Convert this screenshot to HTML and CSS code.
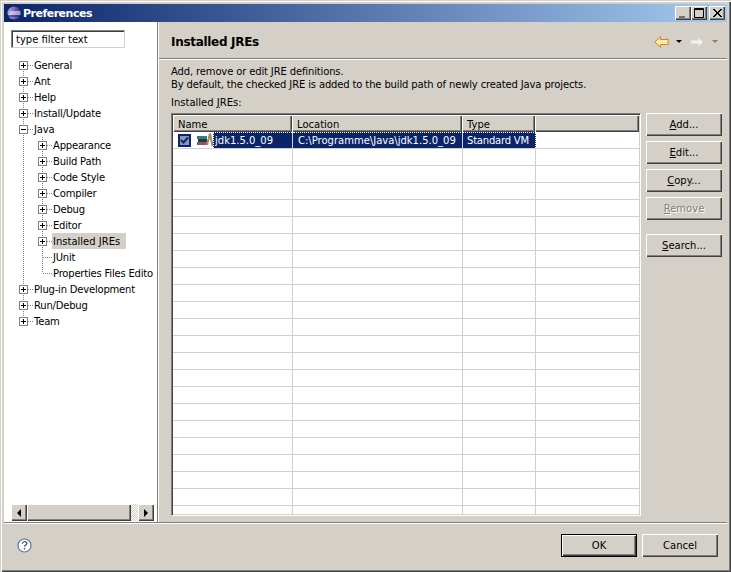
FILE: index.html
```html
<!DOCTYPE html>
<html lang="en">
<head>
<meta charset="utf-8">
<title>Preferences</title>
<link rel="stylesheet" href="styles.css">
</head>
<body>
<div class="window">
  <header class="titlebar">
    <svg class="app-icon" width="14" height="14" viewBox="0 0 14 14"><defs><linearGradient id="sph" x1="0" y1="0" x2="1" y2="0"><stop offset="0" stop-color="#b7a8dc"/><stop offset="1" stop-color="#3c2f8c"/></linearGradient></defs><circle cx="7" cy="7" r="6.500" fill="url(#sph)"/><path d="M3 6h10.500M2 8h11.500" stroke="#fff" stroke-width="1.100"/><path d="M1 10h11" stroke="#2a2270"/></svg>
    <span class="title-text">Preferences</span>
    <div class="win-buttons">
      <button class="win-btn"><svg width="16" height="14" viewBox="0 0 16 14"><path d="M4 10h6v2H4z" fill="#000" opacity=".45"/></svg></button>
      <button class="win-btn"><svg width="16" height="14" viewBox="0 0 16 14"><path d="M3.500 2.500h9v9h-9zM3 3.500h10" fill="none" stroke="#000"/></svg></button>
      <button class="win-btn close"><svg width="16" height="14" viewBox="0 0 16 14"><path d="M4 3l8 8M5 3l8 8M12 3l-8 8M13 3l-8 8" stroke="#000"/></svg></button>
    </div>
  </header>
  <div class="main">
    <aside class="sidebar">
      <input class="filter" value="type filter text">
      <div class="tree">
        <div class="row first"><span class="twist"><i class="box plus"></i></span><span class="label">General</span></div>
        <div class="row lv1"><span class="twist"><i class="box plus"></i></span><span class="label">Ant</span></div>
        <div class="row lv1"><span class="twist"><i class="box plus"></i></span><span class="label">Help</span></div>
        <div class="row lv1"><span class="twist"><i class="box plus"></i></span><span class="label">Install/Update</span></div>
        <div class="row lv1"><span class="twist"><i class="box"></i></span><span class="label">Java</span></div>
        <div class="row"><span class="guide"></span><span class="twist"><i class="box plus"></i></span><span class="label">Appearance</span></div>
        <div class="row"><span class="guide"></span><span class="twist"><i class="box plus"></i></span><span class="label">Build Path</span></div>
        <div class="row"><span class="guide"></span><span class="twist"><i class="box plus"></i></span><span class="label">Code Style</span></div>
        <div class="row"><span class="guide"></span><span class="twist"><i class="box plus"></i></span><span class="label">Compiler</span></div>
        <div class="row"><span class="guide"></span><span class="twist"><i class="box plus"></i></span><span class="label">Debug</span></div>
        <div class="row"><span class="guide"></span><span class="twist"><i class="box plus"></i></span><span class="label">Editor</span></div>
        <div class="row"><span class="guide"></span><span class="twist"><i class="box plus"></i></span><span class="label selected">Installed JREs</span></div>
        <div class="row"><span class="guide"></span><span class="tee"></span><span class="label">JUnit</span></div>
        <div class="row"><span class="guide"></span><span class="elbow"></span><span class="label">Properties Files Edito</span></div>
        <div class="row lv1"><span class="twist"><i class="box plus"></i></span><span class="label">Plug-in Development</span></div>
        <div class="row lv1"><span class="twist"><i class="box plus"></i></span><span class="label">Run/Debug</span></div>
        <div class="row last"><span class="twist"><i class="box plus"></i></span><span class="label">Team</span></div>
      </div>
      <div class="hscroll">
        <span class="sb-btn"><i class="arrow-left"></i></span>
        <span class="sb-thumb"></span>
        <span class="sb-track"></span>
        <span class="sb-btn"><i class="arrow-right"></i></span>
      </div>
    </aside>
    <section class="content">
      <div class="page-head">
        <h1 class="page-title">Installed JREs</h1>
        <div class="nav">
          <svg width="15" height="12" viewBox="0 0 15 12"><path d="M.8 6L6.500.8v2.700h7.700v5H6.500v2.700z" fill="#ffe9a8" stroke="#c98a1a"/></svg>
          <i class="caret"></i>
          <svg class="fwd" width="14" height="10" viewBox="0 0 14 10"><path d="M13 5L8.500.8v2.400H1v3.600h7.500v2.400z" fill="#f4f3ef" stroke="#dededa"/></svg>
          <i class="caret dim"></i>
        </div>
      </div>
      <div class="page-body">
        <p class="intro">Add, remove or edit JRE definitions.<br>By default, the checked JRE is added to the build path of newly created Java projects.</p>
        <p class="table-label">Installed <u>J</u>REs:</p>
        <div class="split">
          <div class="table">
            <div class="thead">
              <span class="th c1">Name</span><span class="th c2">Location</span><span class="th c3">Type</span><span class="th c4"></span>
            </div>
            <div class="tr sel">
              <span class="td c1">
                <span class="check"><svg width="9" height="9" viewBox="0 0 9 9"><path d="M1 4l2.500 2.600L8 1.500" fill="none" stroke="#0a246a" stroke-width="2"/></svg></span>
                <svg class="jre" width="16" height="14" viewBox="0 0 16 14"><path d="M0 3h10v3H0z" fill="#2f7f88"/><path d="M1 6h9v3H1z" fill="#2c3a44"/><path d="M0 9h11v3H0z" fill="#8f5660"/><path d="M13 .5L10 12M13 .5L15.500 13" stroke="#a98a58" stroke-width="2"/></svg>
                <span class="name-sel">jdk1.5.0_09</span>
              </span>
              <span class="td c2 hi">C:\Programme\Java\jdk1.5.0_09</span>
              <span class="td c3 hi focus">Standard VM</span>
              <span class="td c4"></span>
            </div>
            <div class="tr"></div><div class="tr"></div><div class="tr"></div><div class="tr"></div><div class="tr"></div><div class="tr"></div><div class="tr"></div>
            <div class="tr"></div><div class="tr"></div><div class="tr"></div><div class="tr"></div><div class="tr"></div><div class="tr"></div><div class="tr"></div>
            <div class="tr"></div><div class="tr"></div><div class="tr"></div><div class="tr"></div><div class="tr"></div><div class="tr"></div><div class="tr"></div>
            <div class="tr"></div><div class="tr"></div>
          </div>
          <div class="side-buttons">
            <button class="btn"><u>A</u>dd...</button>
            <button class="btn"><u>E</u>dit...</button>
            <button class="btn"><u>C</u>opy...</button>
            <button class="btn disabled"><u>R</u>emove</button>
            <button class="btn gap"><u>S</u>earch...</button>
          </div>
        </div>
      </div>
    </section>
  </div>
  <footer class="footer">
    <svg class="help" width="15" height="15" viewBox="0 0 15 15"><circle cx="7.500" cy="7.500" r="6.500" fill="#fff" stroke="#5a74a8" stroke-width="1.200"/><path d="M5.300 5.600c.2-1.400 1.200-2 2.300-2 1.300 0 2.200.8 2.200 1.900 0 1.600-2.200 1.500-2.200 3.300" fill="none" stroke="#3c5a94" stroke-width="1.400"/><path d="M6.800 10h1.500v1.500H6.800z" fill="#3c5a94"/></svg>
    <div class="footer-buttons">
      <button class="btn default">OK</button>
      <button class="btn">Cancel</button>
    </div>
  </footer>
</div>
</body>
</html>
```

FILE: styles.css
```css
* { box-sizing: border-box; }
html, body { margin: 0; padding: 0; }
body {
  width: 731px;
  height: 572px;
  overflow: hidden;
  font-family: "DejaVu Sans", sans-serif;
  font-size: 10px;
  color: #000;
}
.window {
  width: 731px;
  height: 572px;
  padding: 4px 4px 4px 4px;
  background: #d4d0c8;
  display: flex;
  flex-direction: column;
  box-shadow: inset 1px 1px 0 #d4d0c8, inset 2px 2px 0 #fff, inset -1px -1px 0 #404040, inset -2px -2px 0 #808080;
}
.titlebar {
  height: 18px;
  flex: none;
  display: flex;
  align-items: center;
  padding: 0 2px 0 3px;
  background: linear-gradient(90deg, #0a246a, #a6caf0);
}
.app-icon { flex: none; margin-right: 2px; }
.title-text { color: #fff; font-weight: bold; font-size: 11px; letter-spacing: -0.5px; }
.win-buttons { margin-left: auto; display: flex; }
.win-btn {
  width: 16px;
  height: 14px;
  padding: 0;
  border: 0;
  display: block;
  background: #d4d0c8;
  box-shadow: inset 1px 1px 0 #fff, inset -1px -1px 0 #404040, inset -2px -2px 0 #808080;
}
.win-btn svg { display: block; }
.win-btn.close { margin-left: 2px; }
.main { flex: 1; display: flex; min-height: 0; }
.sidebar {
  width: 155px;
  flex: none;
  background: #fff;
  display: flex;
  flex-direction: column;
  padding: 8px 0 1px 7px;
  border-right: 1px solid #fff;
  box-shadow: inset -1px 0 0 #808080;
}
.filter {
  display: block;
  width: 114px;
  height: 18px;
  padding: 0 0 0 4px;
  margin: 0;
  border: 1px solid;
  border-color: #808080 #d4d0c8 #d4d0c8 #808080;
  box-shadow: inset 1px 1px 0 #404040;
  background: #fff;
  font: inherit;
  color: #000;
  outline: 0;
}
.tree { flex: 1; margin: 9px 0 0 8px; }
.row {
  height: 16px;
  display: flex;
  align-items: stretch;
  white-space: nowrap;
  background-image: repeating-linear-gradient(180deg, #808080 0 1px, transparent 1px 2px);
  background-repeat: no-repeat;
  background-size: 1px 100%;
  background-position: 4px 0;
}
.row.first { background-size: 1px 8px; background-position: 4px 8px; }
.row.last { background-size: 1px 8px; background-position: 4px 0; }
.guide { width: 19px; flex: none; }
.twist, .tee, .elbow {
  width: 14px;
  flex: none;
  display: flex;
  align-items: center;
  background-repeat: no-repeat;
}
.twist {
  background-image: repeating-linear-gradient(90deg, #808080 0 1px, transparent 1px 2px);
  background-size: 5px 1px;
  background-position: 9px 8px;
}
.row:not(.first):not(.last):not(.lv1) .twist,
.tee {
  background-image:
    repeating-linear-gradient(90deg, #808080 0 1px, transparent 1px 2px),
    repeating-linear-gradient(180deg, #808080 0 1px, transparent 1px 2px);
  background-repeat: no-repeat;
}
.row:not(.first):not(.last):not(.lv1) .twist { background-size: 5px 1px, 1px 100%; background-position: 9px 8px, 4px 0; }
.tee { background-size: 9px 1px, 1px 100%; background-position: 5px 8px, 4px 0; }
.elbow {
  background-image:
    repeating-linear-gradient(90deg, #808080 0 1px, transparent 1px 2px),
    repeating-linear-gradient(180deg, #808080 0 1px, transparent 1px 2px);
  background-size: 9px 1px, 1px 8px;
  background-position: 5px 8px, 4px 0;
}
.box {
  display: block;
  width: 9px;
  height: 9px;
  border: 1px solid #808080;
  background-color: #fff;
  background-image: linear-gradient(#000, #000);
  background-size: 5px 1px;
  background-position: 1px 3px;
  background-repeat: no-repeat;
}
.box.plus {
  background-image: linear-gradient(#000, #000), linear-gradient(#000, #000);
  background-size: 5px 1px, 1px 5px;
  background-position: 1px 3px, 3px 1px;
}
.label { padding: 0 6px 0 1px; line-height: 18px; height: 16px; letter-spacing: -0.2px; }
.label.selected { background: #d4d0c8; letter-spacing: 0; }
.hscroll { flex: none; display: flex; height: 17px; width: 143px; }
.sb-btn, .sb-thumb {
  display: flex;
  align-items: center;
  justify-content: center;
  background: #d4d0c8;
  box-shadow: inset 1px 1px 0 #fff, inset -1px -1px 0 #404040, inset -2px -2px 0 #808080;
}
.sb-btn { width: 16px; flex: none; }
.sb-thumb { width: 104px; flex: none; }
.sb-track {
  flex: 1;
  background: repeating-conic-gradient(#fff 0 25%, #d4d0c8 0 50%) 0 0 / 2px 2px;
}
.arrow-left { border: 4px solid transparent; border-left: 0; border-right-color: #000; }
.arrow-right { border: 4px solid transparent; border-right: 0; border-left-color: #000; }
.content { flex: 1; min-width: 0; display: flex; flex-direction: column; }
.page-head {
  height: 38px;
  flex: none;
  display: flex;
  align-items: center;
  justify-content: space-between;
  padding: 2px 9px 0 12px;
  border-bottom: 1px solid #fff;
  box-shadow: inset 0 -1px 0 #808080;
}
.page-title { margin: 0; font-size: 12px; font-weight: bold; letter-spacing: -0.3px; }
.nav { display: flex; align-items: center; }
.caret { display: block; margin-left: 7px; margin-right: 8px; border: 3px solid transparent; border-bottom: 0; border-top: 3px solid #000; }
.caret.dim { border-top-color: #808080; margin-left: 8px; margin-right: 0; }
.page-body { flex: 1; min-height: 0; display: flex; flex-direction: column; padding: 5px 5px 6px 12px; }
.intro { margin: 0; line-height: 13px; letter-spacing: -0.14px; }
.table-label { margin: 5px 0 4px; line-height: 13px; }
.split { flex: 1; min-height: 0; display: flex; }
.table {
  width: 470px;
  flex: none;
  background: #fff;
  border: 1px solid;
  border-color: #808080 #fff #fff #808080;
  box-shadow: inset 1px 1px 0 #404040, inset -1px -1px 0 #d4d0c8;
  padding: 1px;
  overflow: hidden;
}
.thead { display: flex; height: 17px; }
.th {
  padding-left: 5px;
  line-height: 19px;
  background: #d4d0c8;
  box-shadow: inset 1px 1px 0 #fff, inset -1px -1px 0 #404040, inset -2px -2px 0 #808080;
}
.th.c1 { width: 119px; }
.th.c2 { width: 170px; }
.th.c3 { width: 73px; }
.th.c4 { flex: 1; }
.tr { height: 17px; display: flex; border-bottom: 1px solid #d4d0c8; background-image: linear-gradient(#d4d0c8, #d4d0c8), linear-gradient(#d4d0c8, #d4d0c8), linear-gradient(#d4d0c8, #d4d0c8); background-size: 1px 100%; background-repeat: no-repeat; background-position: 119px 0, 289px 0, 362px 0; }
.tr.sel { background: none; }
.td { height: 16px; line-height: 16px; white-space: nowrap; border-right: 1px solid #d4d0c8; display: flex; align-items: flex-start; }
.td.c1 { width: 120px; padding-left: 5px; }
.td.c2 { width: 170px; padding-left: 5px; }
.td.c3 { width: 73px; padding-left: 4px; letter-spacing: -0.2px; }
.td.c4 { flex: 1; border-right: 0; }
.hi {
  background: #0a246a;
  color: #fff;
  border-top: 1px dotted #fff;
}
.td.focus { border-right: 1px dotted #fff; }
.check {
  width: 13px;
  height: 13px;
  flex: none;
  margin-top: 2px;
  background: #8a94b4;
  border: 2px solid #0a246a;
  display: flex;
  align-items: center;
  justify-content: center;
}
.jre { flex: none; margin: 1px 0 0 6px; }
.name-sel {
  background: #0a246a;
  color: #fff;
  height: 16px;
  flex: 1;
  padding-left: 1px;
  line-height: 16px;
  border-top: 1px dotted #fff;
  border-left: 1px dotted #fff;
}
.side-buttons { flex: none; display: flex; flex-direction: column; gap: 5px; margin-left: 5px; }
.btn {
  width: 76px;
  height: 23px;
  padding: 0;
  border: 0;
  font: inherit;
  color: #000;
  background: #d4d0c8;
  box-shadow: inset 1px 1px 0 #fff, inset -1px -1px 0 #404040, inset -2px -2px 0 #808080;
}
.btn.gap { margin-top: 9px; }
.btn.disabled { color: #808080; text-shadow: 1px 1px 0 #fff; }
.btn.default { box-shadow: inset 0 0 0 1px #000, inset 2px 2px 0 #fff, inset -2px -2px 0 #404040, inset -3px -3px 0 #808080; }
.footer {
  height: 46px;
  flex: none;
  display: flex;
  align-items: center;
  justify-content: space-between;
  padding: 2px 9px 2px 13px;
  border-top: 1px solid #808080;
  box-shadow: inset 0 1px 0 #fff;
}
.help { flex: none; }
.footer-buttons { display: flex; gap: 5px; }
```
